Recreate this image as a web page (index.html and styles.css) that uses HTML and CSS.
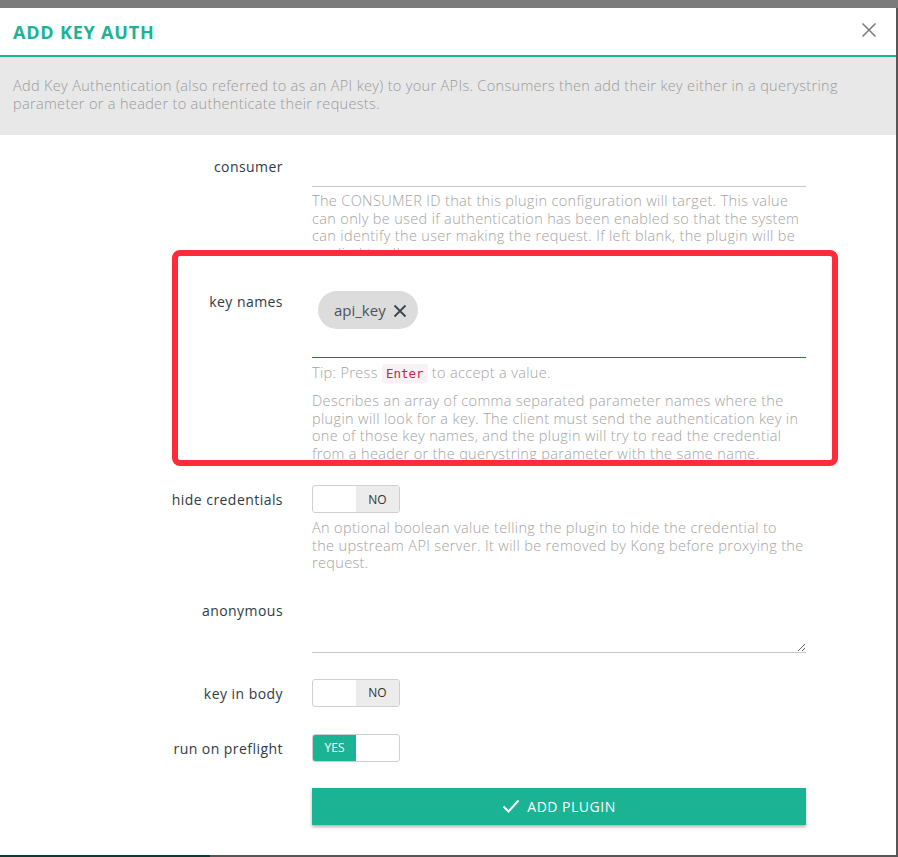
FILE: index.html
```html
<!DOCTYPE html>
<html lang="en">
<head>
<meta charset="utf-8">
<title>Add Key Auth</title>
<link rel="stylesheet" href="styles.css">
</head>
<body>
<div class="modal">
  <header class="modal-header">
    <h1 class="modal-title">ADD KEY AUTH</h1>
    <button class="close" type="button" aria-label="Close">
      <svg width="16" height="16" viewBox="0 0 16 16"><path d="M1.5 1.5 L14.5 14.5 M14.5 1.5 L1.5 14.5" stroke="#7d7d7d" stroke-width="1.6" fill="none"/></svg>
    </button>
  </header>
  <div class="intro">Add Key Authentication (also referred to as an API key) to your APIs. Consumers then add their key either in a querystring<br>parameter or a header to authenticate their requests.</div>
  <form class="form">
    <div class="row">
      <label class="label">consumer</label>
      <div class="field">
        <input class="text-input" type="text">
        <p class="help">The CONSUMER ID that this plugin configuration will target. This value<br>can only be used if authentication has been enabled so that the system<br>can identify the user making the request. If left blank, the plugin will be<br>applied to all consumers.</p>
      </div>
    </div>

    <div class="highlight">
      <div class="row row-inner">
        <label class="label label-keys">key names</label>
        <div class="field">
          <div class="tags">
            <span class="chip">api_key
              <svg class="chip-x" width="14" height="14" viewBox="0 0 14 14"><path d="M1.5 1.5 L12.5 12.5 M12.5 1.5 L1.5 12.5" stroke="#3f4a52" stroke-width="2" fill="none"/></svg>
            </span>
          </div>
          <p class="tip">Tip: Press <code class="kbd">Enter</code> to accept a value.</p>
          <p class="help help-keys">Describes an array of comma separated parameter names where the<br>plugin will look for a key. The client must send the authentication key in<br>one of those key names, and the plugin will try to read the credential<br>from a header or the querystring parameter with the same name.</p>
        </div>
      </div>
    </div>

    <div class="row row-hide">
      <label class="label">hide credentials</label>
      <div class="field">
        <div class="toggle"><span class="toggle-half"></span><span class="toggle-half toggle-no">NO</span></div>
        <p class="help">An optional boolean value telling the plugin to hide the credential to<br>the upstream API server. It will be removed by Kong before proxying the<br>request.</p>
      </div>
    </div>

    <div class="row row-anon">
      <label class="label">anonymous</label>
      <div class="field">
        <textarea class="textarea"></textarea>
      </div>
    </div>

    <div class="row row-body">
      <label class="label">key in body</label>
      <div class="field">
        <div class="toggle"><span class="toggle-half"></span><span class="toggle-half toggle-no">NO</span></div>
      </div>
    </div>

    <div class="row row-preflight">
      <label class="label">run on preflight</label>
      <div class="field">
        <div class="toggle"><span class="toggle-half toggle-yes">YES</span><span class="toggle-half"></span></div>
      </div>
    </div>

    <div class="row row-submit">
      <span></span>
      <button class="submit" type="button">
        <svg width="18" height="14" viewBox="0 0 18 14"><path d="M1.5 7.5 L6.5 12.5 L16.5 1.5" stroke="#fff" stroke-width="2" fill="none"/></svg>
        ADD PLUGIN
      </button>
    </div>
  </form>
</div>
<div class="backdrop-bar"></div>
</body>
</html>
```
FILE: styles.css
```css
html, body {
  margin: 0;
  padding: 0;
}
body {
  width: 898px;
  height: 857px;
  overflow: hidden;
  background: linear-gradient(#7b7b7b 0, #7b7b7b 8px, #565656 8px);
  font-family: "Open Sans", "Liberation Sans", sans-serif;
}
.modal {
  width: 896px;
  height: 847px;
  margin-top: 8px;
  background: #fff;
  overflow: hidden;
}
.modal-header {
  height: 47px;
  border-bottom: 2px solid #1ab394;
  display: flex;
  align-items: center;
  justify-content: space-between;
  padding: 0 19px 0 13px;
}
.modal-title {
  margin: 0;
  font-size: 18px;
  font-weight: 700;
  color: #1ab394;
  letter-spacing: 0.8px;
}
.close {
  border: 0;
  background: none;
  padding: 0;
  width: 16px;
  height: 16px;
  display: flex;
  margin-top: -4px;
}
.intro {
  box-sizing: border-box;
  height: 78px;
  background: #e8e8e8;
  padding: 20px 13px 0;
  font-size: 14.5px;
  line-height: 17.5px;
  letter-spacing: 0.33px;
  font-weight: 300;
  color: #9a9a9a;
  white-space: nowrap;
}
.form {
  padding-top: 17px;
  display: flex;
  flex-direction: column;
}
.row {
  display: grid;
  grid-template-columns: 283px 494px;
  column-gap: 29px;
  align-items: start;
}
.label {
  text-align: right;
  font-size: 14px;
  line-height: 18px;
  font-weight: 500;
  letter-spacing: 0.45px;
  color: #2f3b45;
  padding-top: 6px;
}
.field {
  display: flex;
  flex-direction: column;
}
.text-input {
  box-sizing: border-box;
  height: 35px;
  border: 0;
  border-bottom: 1px solid #c8c8c8;
  outline: none;
  padding: 0;
  margin: 0;
}
.help {
  margin: 5px 0 0;
  font-size: 14.5px;
  line-height: 17.5px;
  letter-spacing: 0.35px;
  font-weight: 300;
  color: #a3a3a3;
  white-space: nowrap;
}
.highlight {
  position: relative;
  box-sizing: border-box;
  margin: -12px 0 0 172px;
  width: 666px;
  height: 216px;
  border: 6px solid #fe2b3a;
  border-radius: 8px;
  background: #fff;
  overflow: hidden;
  padding-top: 29px;
}
.row-inner {
  grid-template-columns: 105px 494px;
}
.label-keys {
  padding-top: 8px;
}
.tags {
  box-sizing: border-box;
  height: 73px;
  border-bottom: 1px solid #2c5fad;
  padding: 6px 0 0 6px;
  display: flex;
  align-items: flex-start;
}
.chip {
  box-sizing: border-box;
  height: 38px;
  width: 100px;
  border-radius: 19px;
  background: #dcdcdc;
  display: flex;
  align-items: center;
  padding-left: 16px;
  gap: 7px;
  font-size: 15px;
  color: #4a545c;
}
.chip-x {
  margin-top: 1px;
}
.tip {
  margin: 6px 0 0;
  font-size: 14.5px;
  line-height: 17.5px;
  letter-spacing: 0.35px;
  font-weight: 300;
  color: #a3a3a3;
}
.kbd {
  font-family: "DejaVu Sans Mono", "Liberation Mono", monospace;
  font-size: 12.5px;
  letter-spacing: 0;
  color: #c7254e;
  background: #f9f2f4;
  padding: 2px 4px;
  border-radius: 3px;
}
.help-keys {
  margin-top: 9.5px;
}
.row-hide {
  margin-top: 19px;
}
.toggle {
  box-sizing: border-box;
  width: 88px;
  height: 28px;
  border: 1px solid #cfcfcf;
  border-radius: 3px;
  display: flex;
  overflow: hidden;
}
.toggle-half {
  flex: 1;
  display: flex;
  align-items: center;
  justify-content: center;
  font-size: 12px;
  color: #333;
}
.toggle-no {
  background: #ececec;
}
.toggle-yes {
  background: #1ab394;
  color: #fff;
}
.row-hide .help {
  margin-top: 6px;
}
.row-anon {
  margin-top: 24px;
}
.textarea {
  box-sizing: border-box;
  height: 57px;
  border: 0;
  border-bottom: 1px solid #c8c8c8;
  outline: none;
  resize: vertical;
  padding: 0;
  margin: 0;
  font-family: inherit;
}
.row-body {
  margin-top: 26px;
}
.row-preflight {
  margin-top: 27px;
}
.row-submit {
  margin-top: 26px;
}
.submit {
  height: 37px;
  border: 0;
  background: #1ab394;
  color: #fff;
  font-family: inherit;
  font-size: 14px;
  font-weight: 500;
  letter-spacing: 0.5px;
  display: flex;
  align-items: center;
  justify-content: center;
  gap: 7px;
  box-shadow: 0 2px 3px rgba(0, 0, 0, 0.3);
  padding: 0;
}
.backdrop-bar {
  width: 210px;
  height: 2px;
  background: #0d3a33;
}
```
